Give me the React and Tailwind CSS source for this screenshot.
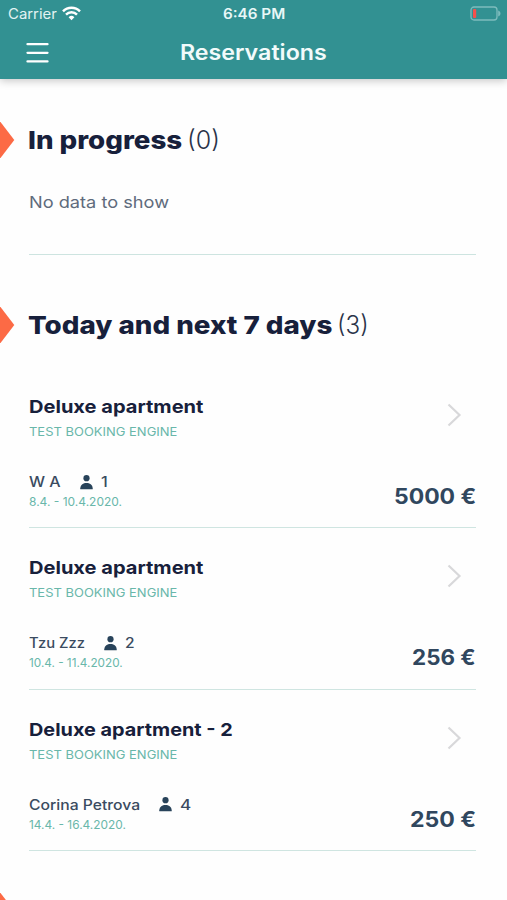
import React, { useLayoutEffect, useRef, useState } from "react";

// One line of text stretched to a given advance width.
function Line({ width, right = false, className = "", children }) {
  const ref = useRef(null);
  const [scale, setScale] = useState(1);
  useLayoutEffect(() => {
    setScale(width / ref.current.offsetWidth);
  }, [width, children]);
  return (
    <div
      className={`flex shrink-0 whitespace-nowrap ${right ? "justify-end" : "justify-start"} ${className}`}
      style={{ width }}
    >
      <span
        ref={ref}
        className={`inline-block shrink-0 ${right ? "origin-right" : "origin-left"}`}
        style={{ transform: `scaleX(${scale})` }}
      >
        {children}
      </span>
    </div>
  );
}

function Person() {
  return (
    <svg className="h-[15px] w-[13px] shrink-0" viewBox="0 0 13 15" fill="#28435a">
      <circle cx="6.5" cy="3.2" r="3.1" />
      <path d="M.3 14.200v-1C.6 9.600 3.300 8 6.500 8s5.900 1.600 6.200 5.200v1z" />
    </svg>
  );
}

function Marker() {
  return (
    <svg className="h-9 w-7 shrink-0" viewBox="0 0 28 36" fill="#fc6a45">
      <path d="M0 0h.5L14.300 17.900.5 36H0z" />
    </svg>
  );
}

function Heading({ title, width, count, countWidth }) {
  return (
    <div className="flex h-9 items-center text-[25px] leading-9 text-[#17203b]">
      <Marker />
      <Line width={width} className="font-extrabold">{title}</Line>
      <Line width={countWidth} className="ml-[5px] font-light text-[#2a3349]">{count}</Line>
    </div>
  );
}

const items = [
  { title: "Deluxe apartment", tw: 175, name: "W A", nw: 32, guests: "1", gw: 7, dates: "8.4. - 10.4.2020.", dw: 93, price: "5000 €", pw: 82 },
  { title: "Deluxe apartment", tw: 175, name: "Tzu Zzz", nw: 56, guests: "2", gw: 10, dates: "10.4. - 11.4.2020.", dw: 94, price: "256 €", pw: 64 },
  { title: "Deluxe apartment - 2", tw: 204, name: "Corina Petrova", nw: 111, guests: "4", gw: 11, dates: "14.4. - 16.4.2020.", dw: 97, price: "250 €", pw: 66 },
];

function Reservation({ item }) {
  return (
    <div className="ml-[29px] mr-[31px] flex h-[161.300px] justify-between border-b-[1.500px] border-[#cfe5e1]">
      <div className="flex flex-col pt-7">
        <Line width={item.tw} className="text-[18px] font-bold leading-6 text-[#17203b]">{item.title}</Line>
        <Line width={148} className="mt-1 text-[12px] leading-[18px] text-[#69b7aa]">TEST BOOKING ENGINE</Line>
        <div className="mt-[31px] flex h-5 items-center text-[14px] font-medium leading-5 text-[#3a4b60]">
          <Line width={item.nw}>{item.name}</Line>
          <div className="ml-[19px] mr-[8px] flex"><Person /></div>
          <Line width={item.gw}>{item.guests}</Line>
        </div>
        <Line width={item.dw} className="mt-[1px] text-[12px] leading-[18px] text-[#69b7aa]">{item.dates}</Line>
      </div>
      <div className="flex flex-col items-end pt-9">
        <svg className="mr-[14px] h-6 w-4" viewBox="0 0 16 24" fill="none" stroke="#d8d8da" strokeWidth="2.200">
          <path d="M2.500 1.500 13.500 12 2.500 22.500" />
        </svg>
        <Line width={item.pw} right className="mt-[56px] text-[21px] font-bold leading-7 text-[#30475e]">{item.price}</Line>
      </div>
    </div>
  );
}

export default function App() {
  return (
    <div className="h-[900px] w-[507px] overflow-hidden bg-[#fefefe] font-['Inter','Liberation_Sans',sans-serif]">
      <header className="flex h-[79px] flex-col bg-[#329192] text-white shadow-[0_2px_8px_rgba(0,0,0,0.22)]">
        <div className="grid h-7 grid-cols-3 items-center pl-2 pr-1.5 text-[14px] leading-7">
          <div className="flex items-center gap-[5px] text-[#e2f3f3]">
            <Line width={49}>Carrier</Line>
            <svg className="-mt-0.5 h-[15px] w-[19px]" viewBox="0 0 19 15" fill="none" stroke="#fff" strokeWidth="2.500">
              <path d="M1 5.400a12 12 0 0 1 17 0" />
              <path d="M4 8.600a7.800 7.800 0 0 1 11 0" />
              <path d="M6.600 11.200a4.100 4.100 0 0 1 5.800 0L9.500 14.200z" fill="#fff" stroke="none" />
            </svg>
          </div>
          <div className="flex justify-center">
            <Line width={62} className="font-semibold text-[#e8f7f7]">6:46 PM</Line>
          </div>
          <div className="flex justify-end">
            <svg className="-mt-0.5 h-[15px] w-[31px]" viewBox="0 0 31 15" fill="none">
              <rect x="1" y="1" width="26" height="13" rx="3" stroke="#7dbcbd" strokeWidth="1.300" />
              <rect x="3" y="3" width="3.200" height="9" rx="1" fill="#f5504c" />
              <path d="M28.200 4.500c3 1 3 5 0 6z" fill="#7dbcbd" />
            </svg>
          </div>
        </div>
        <div className="grid h-[49px] grid-cols-[1fr_auto_1fr] items-center">
          <svg className="ml-[26px] h-[22px] w-[23px]" viewBox="0 0 23 22" fill="none" stroke="#fff" strokeWidth="2.300" strokeLinecap="round">
            <path d="M1.500 2.200h20M1.500 10.800h20M1.500 19.400h20" />
          </svg>
          <Line width={147} className="text-[21px] font-semibold leading-8 text-[#f2fbfb]">Reservations</Line>
          <div />
        </div>
      </header>

      <section className="flex h-[176px] flex-col pt-[43px]">
        <Heading title="In progress" width={154} count="(0)" countWidth={33} />
        <Line width={140} className="ml-[28.500px] mt-8 text-[16.500px] leading-6 text-[#5f6b7c]">No data to show</Line>
        <div className="ml-[29px] mr-[31px] mt-10 h-px shrink-0 bg-[#cde4e0]" />
      </section>

      <section className="pt-[52px]">
        <Heading title="Today and next 7 days" width={304} count="(3)" countWidth={32} />
        <div className="pt-6">
          {items.map((item, i) => (
            <Reservation key={i} item={item} />
          ))}
        </div>
      </section>

      <section className="pt-[42px]">
        <Marker />
      </section>
    </div>
  );
}
